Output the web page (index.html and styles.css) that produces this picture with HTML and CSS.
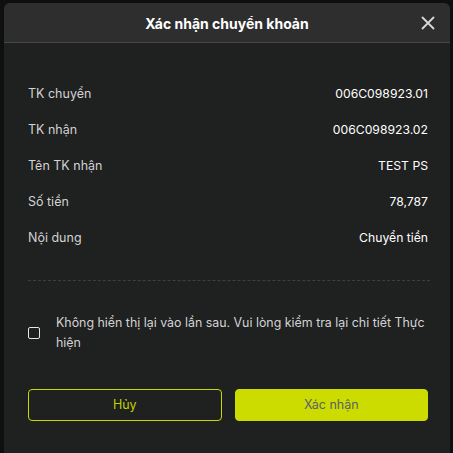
FILE: index.html
```html
<!DOCTYPE html>
<html lang="vi">
<head>
<meta charset="utf-8">
<link rel="stylesheet" href="styles.css">
</head>
<body>
<div class="modal">
  <div class="header">
    <div class="title">Xác nhận chuyển khoản</div>
    <button class="close" aria-label="close">
      <svg width="14" height="14" viewBox="0 0 14 14"><path d="M1.5 1.5L12.5 12.5M12.5 1.5L1.5 12.5" stroke="#d8d8d8" stroke-width="1.8" stroke-linecap="round"/></svg>
    </button>
  </div>
  <div class="body">
    <div class="rows">
      <div class="row"><span class="label">TK chuyển</span><span class="value">006C098923.01</span></div>
      <div class="row"><span class="label">TK nhận</span><span class="value">006C098923.02</span></div>
      <div class="row"><span class="label">Tên TK nhận</span><span class="value">TEST PS</span></div>
      <div class="row"><span class="label">Số tiền</span><span class="value">78,787</span></div>
      <div class="row"><span class="label">Nội dung</span><span class="value">Chuyển tiền</span></div>
    </div>
    <div class="divider"></div>
    <label class="check">
      <span class="box"></span>
      <span class="check-text">Không hiển thị lại vào lần sau. Vui lòng kiểm tra lại chi tiết Thực hiện</span>
    </label>
    <div class="actions">
      <button class="btn btn-outline">Hủy</button>
      <button class="btn btn-primary">Xác nhận</button>
    </div>
  </div>
</div>
</body>
</html>
```
FILE: styles.css
```css
html, body {
  margin: 0;
  padding: 0;
  background: #0e0f0f;
  font-family: Inter, "Noto Sans", sans-serif;
}
body {
  padding: 3px 3px 0 4px;
  height: 453px;
  box-sizing: border-box;
  overflow: hidden;
}
.modal {
  width: 446px;
  height: 460px;
  background: #1f2020;
  border-radius: 6px 6px 0 0;
  overflow: hidden;
}
.header {
  position: relative;
  height: 39px;
  background: #2e2e2e;
  border-bottom: 1px solid #474747;
  display: flex;
  align-items: center;
  justify-content: center;
}
.title {
  color: #ffffff;
  font-weight: 700;
  font-size: 14px;
  margin-top: 1px;
}
.close {
  position: absolute;
  right: 15px;
  top: 13px;
  background: none;
  border: 0;
  padding: 0;
  width: 14px;
  height: 14px;
  display: flex;
}
.body {
  padding: 32px 22px 0 24px;
}
.row {
  display: flex;
  justify-content: space-between;
  align-items: center;
  height: 36px;
  font-size: 12.5px;
}
.row + .row { margin-top: 0.2px; }
.label { color: #d3d3d3; }
.value { color: #ffffff; font-size: 12.2px; }
.divider {
  margin-top: 24px;
  border-top: 1px dashed #3e3f3f;
  margin-right: -2px;
}
.check {
  display: flex;
  align-items: center;
  gap: 16px;
  margin-top: 32px;
}
.box {
  flex: none;
  width: 10px;
  height: 10px;
  border: 1.5px solid #e6e6e6;
  border-radius: 2px;
}
.check-text {
  color: #d3d3d3;
  font-size: 12.4px;
  line-height: 20px;
}
.actions {
  display: flex;
  gap: 13px;
  margin-top: 36px;
}
.btn {
  flex: 1;
  height: 32px;
  border-radius: 4px;
  font-family: Inter, "Noto Sans", sans-serif;
  font-size: 12.5px;
  cursor: pointer;
}
.btn-outline {
  background: transparent;
  border: 1px solid #c9d800;
  color: #c2d100;
}
.btn-primary {
  background: #ccdc00;
  border: 1px solid #ccdc00;
  color: #5b5f6e;
}
```
